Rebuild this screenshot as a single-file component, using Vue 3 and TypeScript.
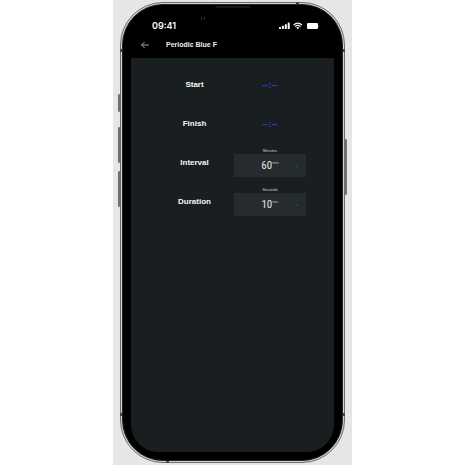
<script setup lang="ts">
import { ref } from 'vue'

interface TimeRow {
  id: string
  label: string
}

interface PickerRow {
  id: string
  label: string
  caption: string
  unit: string
  options: number[]
}

const timeRows: TimeRow[] = [
  { id: 'start', label: 'Start' },
  { id: 'finish', label: 'Finish' },
]

const pickerRows: PickerRow[] = [
  { id: 'interval', label: 'Interval', caption: 'Minutes', unit: 'min', options: [10, 30, 60] },
  { id: 'duration', label: 'Duration', caption: 'Seconds', unit: 'sec', options: [10, 20, 30] },
]

const times = ref<Record<string, string>>({ start: '', finish: '' })
const amounts = ref<Record<string, number>>({ interval: 60, duration: 10 })
</script>

<template>
  <div class="page">
    <div class="backdrop">
      <div class="phone">
        <i class="key key-mute"></i>
        <i class="key key-up"></i>
        <i class="key key-down"></i>
        <i class="key key-power"></i>
        <i class="band band-left band-high"></i>
        <i class="band band-left band-low"></i>
        <i class="band band-right band-high"></i>
        <i class="band band-right band-low"></i>
        <i class="band band-top"></i>
        <i class="band band-bottom"></i>
        <i class="speaker"></i>
        <i class="camera"></i>

        <div class="body">
          <div class="status">
            <span class="clock">09:41</span>
            <svg class="signals" viewBox="0 0 40 8" aria-hidden="true">
              <g fill="#fff">
                <rect x="0" y="5" width="2" height="2" rx=".5" />
                <rect x="2.9" y="3.8" width="2" height="3.2" rx=".5" />
                <rect x="5.8" y="2.2" width="2" height="4.8" rx=".5" />
                <rect x="8.7" y=".6" width="2" height="6.4" rx=".5" />
                <path d="M18.8 7.2 17.2 5.6Q18.8 4.4 20.4 5.6Z" />
                <rect x="28" y="1" width="11" height="6" rx="1.2" />
                <rect x="39.3" y="3" width=".7" height="2" rx=".3" opacity=".5" />
              </g>
              <g fill="none" stroke="#fff" stroke-width="1.1">
                <path d="M14.6 3Q18.8-.7 23 3" />
                <path d="M16 4.6Q18.8 2.1 21.6 4.6" />
              </g>
            </svg>
          </div>

          <header class="bar">
            <button class="back" type="button" aria-label="Back">
              <svg viewBox="0 0 8 8" aria-hidden="true">
                <path d="M7.8 4H.6M3.6 1 .6 4l3 3" fill="none" stroke="#ccc" stroke-width=".8" />
              </svg>
            </button>
            <h1 class="title">Periodic Blue F</h1>
          </header>

          <main class="screen">
            <div v-for="row in timeRows" :key="row.id" class="row">
              <label class="name" :for="row.id">{{ row.label }}</label>
              <input :id="row.id" v-model="times[row.id]" class="time" type="text" placeholder="--:--" />
            </div>
            <div v-for="row in pickerRows" :key="row.id" class="row">
              <label class="name" :for="row.id">{{ row.label }}</label>
              <div class="picker">
                <span class="caption">{{ row.caption }}</span>
                <div class="box">
                  <select :id="row.id" v-model="amounts[row.id]" class="amount">
                    <option v-for="n in row.options" :key="n" :value="n">{{ n }}</option>
                  </select>
                  <span class="unit">{{ row.unit }}</span>
                  <svg class="caret" viewBox="0 0 4 3" aria-hidden="true">
                    <path d="M.5.6h3L2 2.4Z" fill="#254866" />
                  </svg>
                </div>
              </div>
            </div>
          </main>
        </div>
      </div>
    </div>
  </div>
</template>

<style>
body {
  background: #fff;
}
</style>

<style scoped>
* {
  box-sizing: border-box;
}

.page {
  display: flex;
  min-height: 100vh;
  padding: 0 113px;
  font-family: 'Liberation Sans', Arial, sans-serif;
}

.backdrop {
  display: flex;
  flex: 1;
  padding: 2px 7px;
  background: #e6e6e6;
}

.phone {
  position: relative;
  display: flex;
  flex: 1;
  border: 1px solid #6d6d6b;
  border-radius: 43px;
  background: #d4d4d0;
  padding: 1px;
}

.body {
  display: flex;
  flex: 1;
  flex-direction: column;
  padding: 0 8px 8px;
  border: 1px solid #222;
  border-radius: 41px;
  background: #000;
}

.status {
  display: flex;
  align-items: center;
  justify-content: space-between;
  height: 31px;
  padding: 11px 15px 0 21px;
  color: #fff;
}

.clock {
  font: 600 9px/12px Inter, sans-serif;
}

.signals {
  width: 40px;
  height: 8px;
}

.bar {
  display: flex;
  align-items: flex-start;
  gap: 16px;
  height: 22px;
  padding: 4px 9px 0;
}

.back {
  display: flex;
  width: 10px;
  height: 10px;
  padding: 1px;
  border: 0;
  background: none;
}

.back svg {
  width: 8px;
  height: 8px;
}

.title {
  margin: 0;
  color: #eee;
  font-size: 7px;
  line-height: 10px;
}

.screen {
  flex: 1;
  padding: 7px 28px 7px 26px;
  border-radius: 0 0 27px 27px;
  background: #191e20;
}

.row {
  display: grid;
  grid-template-columns: 1fr 72px;
  align-items: center;
  gap: 2px;
  height: 39px;
}

.name {
  color: #f8f8f8;
  font-size: 8px;
  font-weight: 700;
  line-height: 12px;
  text-align: center;
}

.time {
  width: 100%;
  height: 19px;
  padding: 0;
  border: 0;
  background: none;
  color: #3c3cd8;
  font: 700 9px/11px 'Liberation Sans', sans-serif;
  text-align: center;
}

.time::placeholder {
  color: #3c3cd8;
  opacity: 1;
}

.picker {
  display: flex;
  flex-direction: column;
  height: 29px;
}

.caption {
  color: #d0d0d0;
  font-size: 4px;
  line-height: 6px;
  text-align: center;
}

.box {
  position: relative;
  display: flex;
  justify-content: center;
  height: 23px;
  padding-top: 5px;
  background: #262c2e;
}

.amount {
  field-sizing: content;
  height: 13px;
  padding: 0;
  border: 0;
  appearance: none;
  background: none;
  color: #e4e4e4;
  font: 11px/13px 'Roboto Condensed', 'Open Sans Condensed', 'Liberation Sans', sans-serif;
}

.unit {
  color: #c4c4c4;
  font-size: 4px;
  line-height: 8px;
}

.caret {
  position: absolute;
  top: 11px;
  right: 7px;
  width: 4px;
  height: 3px;
}

.key {
  position: absolute;
  left: -3px;
  width: 2px;
  border-radius: 1px;
  background: #70706e;
}

.key-mute {
  top: 91px;
  height: 18px;
}

.key-up {
  top: 124px;
  height: 36px;
}

.key-down {
  top: 168px;
  height: 36px;
}

.key-power {
  top: 136px;
  right: -3px;
  left: auto;
  height: 56px;
}

.band {
  position: absolute;
  width: 2px;
  height: 3px;
  background: #444;
}

.band-left {
  left: -1px;
}

.band-right {
  right: -1px;
}

.band-high {
  top: 46px;
}

.band-low {
  bottom: 46px;
}

.band-top,
.band-bottom {
  width: 3px;
  height: 2px;
}

.band-top {
  top: -1px;
  right: 45px;
}

.band-bottom {
  bottom: -1px;
  left: 45px;
}

.speaker {
  position: absolute;
  top: 3px;
  left: 50%;
  width: 36px;
  height: 2px;
  margin-left: -18px;
  border-radius: 1px;
  background: #151515;
}

.camera {
  position: absolute;
  top: 14px;
  left: 36%;
  width: 4px;
  height: 3px;
  border: solid #34343c;
  border-width: 0 1px;
}
</style>
